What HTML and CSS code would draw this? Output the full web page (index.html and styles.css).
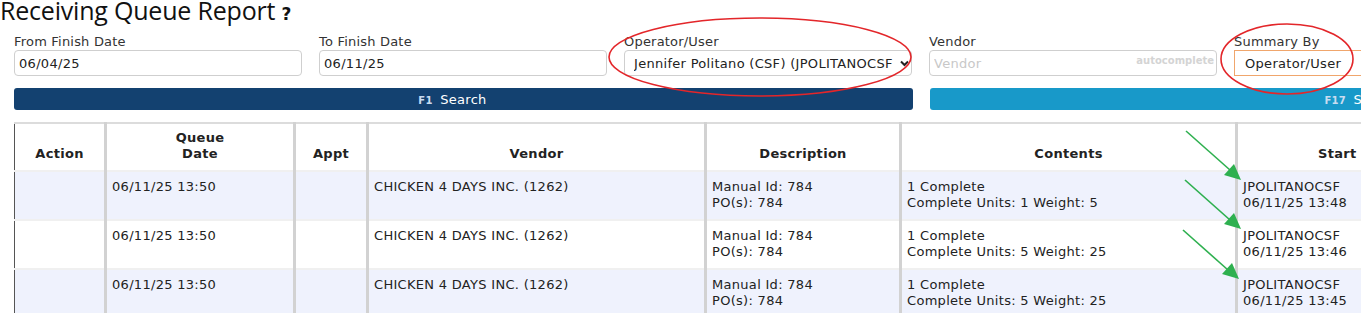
FILE: index.html
```html
<!DOCTYPE html>
<html lang="en">
<head>
  <meta charset="UTF-8" />
  <title>Receiving Queue Report</title>
  <link rel="stylesheet" href="styles.css">
</head>
<body>
  <div class="page">
    <h1 class="title">Receiving Queue Report <span class="help">?</span></h1>

    <div class="filters">
      <div class="field">
        <label>From Finish Date</label>
        <input class="box" type="text" value="06/04/25">
      </div>
      <div class="field">
        <label>To Finish Date</label>
        <input class="box" type="text" value="06/11/25">
      </div>
      <div class="field">
        <label>Operator/User</label>
        <div class="select-wrap">
          <select class="box">
            <option>Jennifer Politano (CSF) (JPOLITANOCSF)</option>
          </select>
          <svg class="chevron" width="9" height="7" viewBox="0 0 9 7"><path d="M1 1.5 L4.5 5 L8 1.5" fill="none" stroke="#222" stroke-width="2"/></svg>
        </div>
      </div>
      <div class="field">
        <label>Vendor</label>
        <div class="auto-wrap">
          <input class="box" type="text" placeholder="Vendor">
          <span class="auto-hint">autocomplete</span>
        </div>
      </div>
      <div class="field">
        <label>Summary By</label>
        <div class="select-wrap">
          <select class="box focused">
            <option>Operator/User</option>
          </select>
        </div>
      </div>
    </div>

    <div class="actions">
      <button class="btn btn-search"><span class="key">F1</span> Search</button>
      <button class="btn btn-alt"><span class="key">F17</span> Summary</button>
    </div>

    <table class="report">
      <colgroup>
        <col style="width:91px">
        <col style="width:189px">
        <col style="width:73px">
        <col style="width:338px">
        <col style="width:195px">
        <col style="width:336px">
        <col style="width:200px">
      </colgroup>
      <thead>
        <tr>
          <th>Action</th>
          <th>Queue<br>Date</th>
          <th>Appt</th>
          <th>Vendor</th>
          <th>Description</th>
          <th>Contents</th>
          <th>Start</th>
        </tr>
      </thead>
      <tbody>
        <tr>
          <td></td>
          <td>06/11/25 13:50</td>
          <td></td>
          <td>CHICKEN 4 DAYS INC. (1262)</td>
          <td>Manual Id: 784<br>PO(s): 784</td>
          <td>1 Complete<br>Complete Units: 1 Weight: 5</td>
          <td>JPOLITANOCSF<br>06/11/25 13:48</td>
        </tr>
        <tr>
          <td></td>
          <td>06/11/25 13:50</td>
          <td></td>
          <td>CHICKEN 4 DAYS INC. (1262)</td>
          <td>Manual Id: 784<br>PO(s): 784</td>
          <td>1 Complete<br>Complete Units: 5 Weight: 25</td>
          <td>JPOLITANOCSF<br>06/11/25 13:46</td>
        </tr>
        <tr>
          <td></td>
          <td>06/11/25 13:50</td>
          <td></td>
          <td>CHICKEN 4 DAYS INC. (1262)</td>
          <td>Manual Id: 784<br>PO(s): 784</td>
          <td>1 Complete<br>Complete Units: 5 Weight: 25</td>
          <td>JPOLITANOCSF<br>06/11/25 13:45</td>
        </tr>
      </tbody>
    </table>
  </div>

  <!-- markup drawn over the screenshot -->
  <svg class="marks" width="1361" height="313" viewBox="0 0 1361 313">
    <ellipse cx="760" cy="57" rx="151" ry="39" fill="none" stroke="#e3262a" stroke-width="1.6"/>
    <ellipse cx="1287" cy="59" rx="66" ry="35" fill="none" stroke="#e3262a" stroke-width="1.6"/>
    <g stroke="#2eb04f" stroke-width="1.6">
      <line x1="1186" y1="131" x2="1230" y2="170"/>
      <line x1="1185" y1="180" x2="1230" y2="220"/>
      <line x1="1183" y1="230" x2="1228" y2="270"/>
    </g>
    <g fill="#2eb04f">
      <polygon points="1241,180 1224,175 1234,164"/>
      <polygon points="1241,229 1224,224 1234,213"/>
      <polygon points="1239,279 1222,274 1232,263"/>
    </g>
  </svg>
</body>
</html>
```

FILE: styles.css
```css
:root {
  --text: #222;
  --label: #333;
  --border: #cfcfcf;
  --navy: #134170;
  --sky: #1899c9;
  --row: #eff2fd;
  --grid: #d2d2d2;
  --rule: #f0f0f0;
}

html, body {
  margin: 0;
  overflow: hidden;
  background: #fff;
}

body {
  font-family: "DejaVu Sans", Verdana, sans-serif;
  font-size: 13px;
  letter-spacing: 0.3px;
  color: var(--text);
  position: relative;
}

.page {
  width: 1900px;
}

.title {
  margin: 0;
  font-family: "Open Sans", sans-serif;
  font-weight: 400;
  font-size: 25px;
  line-height: 26px;
  height: 30px;
  margin-top: -3px;
  color: #111;
  letter-spacing: -0.2px;
}

.help {
  font-family: "DejaVu Sans", sans-serif;
  font-weight: 700;
  font-size: 17px;
}

.filters {
  display: grid;
  grid-template-columns: repeat(5, 288px);
  column-gap: 17px;
  padding: 0 14px;
  margin-top: 7px;
}

.field label {
  display: block;
  color: var(--label);
  line-height: 16px;
  letter-spacing: 0.2px;
}

.box {
  box-sizing: border-box;
  width: 100%;
  height: 26px;
  border: 1px solid var(--border);
  border-radius: 4px;
  padding: 0 4px;
  font-family: inherit;
  font-size: 13px;
  letter-spacing: 0.3px;
  color: var(--text);
  background: #fff;
  outline: none;
}

.box::placeholder {
  color: #c8c8c8;
}

select.box {
  appearance: none;
  -webkit-appearance: none;
  padding: 0 18px 0 9px;
}

select.focused {
  border-color: #f0a66c;
  border-radius: 0;
  padding-left: 10px;
}

.select-wrap,
.auto-wrap {
  position: relative;
}

.chevron {
  position: absolute;
  right: 3px;
  top: 10px;
  background: #fff;
  padding-left: 3px;
}

.auto-hint {
  position: absolute;
  right: 3px;
  top: 5px;
  font-size: 10px;
  font-weight: 700;
  letter-spacing: 0;
  color: #d4d4d4;
}

.actions {
  display: grid;
  grid-template-columns: 899px 899px;
  column-gap: 17px;
  padding: 0 14px;
  margin-top: 12px;
}

.btn {
  height: 22px;
  border: none;
  border-radius: 3px;
  color: #fff;
  font-family: inherit;
  font-size: 13px;
  letter-spacing: 0.3px;
  padding: 0;
  padding-right: 22px;
}

.btn .key {
  font-size: 10px;
  font-weight: 700;
  color: #c9dcf0;
  margin-right: 3px;
}

.btn-search {
  background: var(--navy);
}

.btn-alt {
  background: var(--sky);
  padding-right: 16px;
}

.report {
  margin: 12px 0 0 14px;
  border-collapse: collapse;
  table-layout: fixed;
  border-top: 2px solid #dcdcdc;
}

.report th,
.report td {
  border-left: 3px solid var(--grid);
  border-bottom: 2px solid var(--rule);
  line-height: 16px;
}

.report th:first-child,
.report td:first-child {
  border-left: 1px solid #555;
}

.report th {
  height: 48px;
  box-sizing: border-box;
  padding: 0 6px 8px;
  font-weight: 700;
  text-align: center;
  vertical-align: bottom;
}

.report td {
  height: 49px;
  box-sizing: border-box;
  padding: 7px 5px;
  vertical-align: top;
  white-space: nowrap;
}

.report tbody tr:nth-child(odd) {
  background: var(--row);
}

.marks {
  position: absolute;
  left: 0;
  top: 0;
  pointer-events: none;
}
```
